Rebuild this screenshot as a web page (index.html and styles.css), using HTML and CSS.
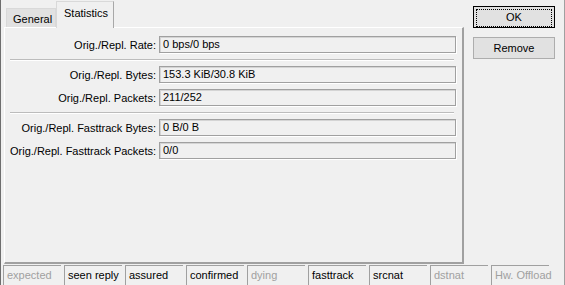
FILE: index.html
```html
<!DOCTYPE html>
<html lang="en">
<head>
    <meta charset="UTF-8">
    <title>Connection</title>
    <link rel="stylesheet" href="styles.css">
</head>
<body>
    <div class="window">
        <div class="main">
            <div class="tabs">
                <div class="tab">General</div>
                <div class="tab active">Statistics</div>
            </div>
            <div class="panel">
                <div class="row">
                    <label>Orig./Repl. Rate:</label>
                    <div class="field">0 bps/0 bps</div>
                </div>
                <div class="sep"></div>
                <div class="row">
                    <label>Orig./Repl. Bytes:</label>
                    <div class="field">153.3 KiB/30.8 KiB</div>
                </div>
                <div class="row">
                    <label>Orig./Repl. Packets:</label>
                    <div class="field">211/252</div>
                </div>
                <div class="sep"></div>
                <div class="row">
                    <label>Orig./Repl. Fasttrack Bytes:</label>
                    <div class="field">0 B/0 B</div>
                </div>
                <div class="row">
                    <label>Orig./Repl. Fasttrack Packets:</label>
                    <div class="field">0/0</div>
                </div>
            </div>
        </div>
        <div class="side">
            <button class="btn default"><span>OK</span></button>
            <button class="btn">Remove</button>
        </div>
    </div>

    <div class="status">
        <div class="cell off">expected</div>
        <div class="cell">seen reply</div>
        <div class="cell">assured</div>
        <div class="cell">confirmed</div>
        <div class="cell off">dying</div>
        <div class="cell">fasttrack</div>
        <div class="cell">srcnat</div>
        <div class="cell off">dstnat</div>
        <div class="cell off">Hw. Offload</div>
    </div>
</body>
</html>
```

FILE: styles.css
```css
html, body {
    margin: 0;
    padding: 0;
}
body {
    font-family: "Liberation Sans", Arial, sans-serif;
    font-size: 11px;
    color: #000;
    background: #f0f0f0;
    width: 565px;
    height: 285px;
    overflow: hidden;
    border-left: 1px solid #6e6e6e;
    border-right: 1px solid #a0a0a0;
    box-sizing: border-box;
}
.window {
    display: flex;
    padding: 1px 0 0 3px;
}
.main {
    width: 460px;
}
.tabs {
    display: flex;
    align-items: flex-end;
    height: 26px;
    padding-left: 2px;
}
.tab {
    box-sizing: border-box;
    height: 19px;
    width: 50px;
    padding: 4px 0 0 6px;
    background: #e1e1e1;
    border: 1px solid #d9d9d9;
    border-bottom: none;
}
.tab.active {
    height: 27px;
    width: 58px;
    margin-bottom: -1px;
    padding: 5px 0 0 7px;
    background: #f0f0f0;
    border-color: #d9d9d9 #a8a8a8 transparent #d9d9d9;
    position: relative;
    z-index: 1;
}
.panel {
    box-sizing: border-box;
    height: 237px;
    padding: 8px 8px 0 5px;
    border-top: 1px solid #fff;
    border-left: 1px solid #fff;
    border-right: 2px solid #a0a0a0;
    border-bottom: 2px solid #a0a0a0;
}
.row {
    display: grid;
    grid-template-columns: 146px 297px;
    column-gap: 3px;
    align-items: center;
    margin-bottom: 6px;
}
.row label {
    text-align: right;
    white-space: nowrap;
}
.field {
    box-sizing: border-box;
    height: 17px;
    padding: 1px 3px;
    border: 1px solid #a0a0a0;
    box-shadow: 1px 1px 0 #fff, inset 1px 1px 0 #d4d4d4;
    white-space: nowrap;
}
.sep {
    height: 1px;
    margin: 1px 0 5px;
    background: #bcbcbc;
    border-bottom: 1px solid #fff;
}
.side {
    display: flex;
    flex-direction: column;
    gap: 9px;
    margin: 5px 0 0 9px;
}
.btn {
    box-sizing: border-box;
    width: 82px;
    height: 22px;
    padding: 0;
    font: inherit;
    color: #000;
    background: #e1e1e1;
    border: 1px solid #adadad;
}
.btn.default {
    border: 1px solid #000;
    padding: 2px;
}
.btn.default span {
    display: block;
    height: 100%;
    line-height: 14px;
    border: 1px dotted #000;
}
.status {
    display: flex;
    gap: 3px;
    margin: 1px 0 0 2px;
}
.cell {
    box-sizing: border-box;
    width: 58px;
    height: 22px;
    padding: 3px 0 0 3px;
    border-top: 1px solid #a0a0a0;
    border-left: 1px solid #a0a0a0;
    white-space: nowrap;
}
.cell.off {
    color: #a0a0a0;
}
```
